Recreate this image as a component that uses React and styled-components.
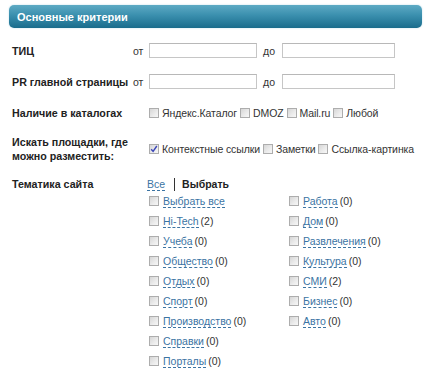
import React from "react";
import styled, { createGlobalStyle } from "styled-components";

const GlobalStyle = createGlobalStyle`
  body {
    margin: 0;
    background: #fff;
    font-family: "Liberation Sans", Tahoma, Arial, sans-serif;
    font-size: 10.5px;
    color: #333;
  }
`;

const Panel = styled.div`
  width: 424px;
  height: 376px;
  overflow: hidden;
`;

const Header = styled.div`
  margin: 5px 2px 0 9px;
  height: 23px;
  border-radius: 5px;
  background: linear-gradient(to bottom, #5eaac4 0%, #3a8fae 45%, #1a6c8c 100%);
  box-shadow: 0 0 2px #b9dbe8;
  display: flex;
  align-items: center;
  padding-left: 8px;
  color: #fff;
  font-weight: bold;
  font-size: 11px;
`;

const Form = styled.div`
  display: flex;
  flex-direction: column;
  gap: 14px;
  padding: 14px 0 0 12px;
`;

const Row = styled.div`
  display: grid;
  grid-template-columns: 121px 13px 1fr;
  align-items: ${(p) => (p.$top ? "start" : "center")};
  min-height: 17px;
`;

const Label = styled.div`
  grid-column: ${(p) => (p.$wide ? "span 2" : "span 1")};
  font-weight: bold;
  font-size: 10.7px;
  color: #222;
  line-height: 14px;
  white-space: nowrap;
`;

const Prefix = styled.span`
  color: #333;
`;

const Controls = styled.div`
  display: flex;
  align-items: center;
  gap: 0;
`;

const Field = styled.input`
  box-sizing: border-box;
  width: ${(p) => p.$w}px;
  height: 15px;
  margin-left: ${(p) => p.$ml || 0}px;
  border: 1px solid #c6c6c6;
  border-top-color: #b8b8b8;
  background: #fff;
  padding: 0 2px;
  font: inherit;
  outline: none;
`;

const Sep = styled.span`
  margin: 0 7px 0 6px;
`;

const Option = styled.label`
  display: inline-flex;
  align-items: center;
  gap: 3px;
  white-space: nowrap;
  color: #333;
  line-height: 14px;
  letter-spacing: -0.1px;
`;

const Box = styled.span`
  box-sizing: border-box;
  width: 10px;
  height: 10px;
  margin-left: 3px;
  border: 1px solid #adadad;
  background: linear-gradient(135deg, #d6d6d6 0%, #ececec 60%, #f7f7f7 100%);
  display: inline-flex;
  align-items: center;
  justify-content: center;
  flex: none;
`;

const Topic = styled.div`
  grid-column: 3;
  display: flex;
  flex-direction: column;
`;

const Tabs = styled.div`
  display: flex;
  align-items: center;
  height: 14px;
  line-height: 14px;
  margin-left: 1px;
`;

const TabLink = styled.span`
  color: #3b74a3;
  border-bottom: 1px dashed #3b74a3;
  line-height: 12px;
`;

const Bar = styled.span`
  width: 1px;
  height: 13px;
  background: #333;
  margin: 0 7px 0 9px;
`;

const Strong = styled.span`
  font-weight: bold;
  color: #222;
`;

const Columns = styled.div`
  display: grid;
  grid-template-columns: 140px 140px;
`;

const Column = styled.div`
  display: flex;
  flex-direction: column;
`;

const Item = styled.label`
  height: 20px;
  display: flex;
  align-items: center;
  gap: 4px;
  white-space: nowrap;
`;

const Link = styled.span`
  color: #3b74a3;
  border-bottom: 1px dashed #3b74a3;
  line-height: 12px;
`;

const Count = styled.span`
  color: #333;
  margin-left: 2px;
`;

function Check({ checked }) {
  return (
    <Box>
      {checked && (
        <svg width="8" height="8" viewBox="0 0 8 8">
          <path d="M1.2 4.2 L3.1 6.4 L6.8 1" fill="none" stroke="#3b46b8" strokeWidth="1.4" />
        </svg>
      )}
    </Box>
  );
}

const left = [
  ["Выбрать все"],
  ["Hi-Tech", 2],
  ["Учеба", 0],
  ["Общество", 0],
  ["Отдых", 0],
  ["Спорт", 0],
  ["Производство", 0],
  ["Справки", 0],
  ["Порталы", 0],
];

const right = [
  ["Работа", 0],
  ["Дом", 0],
  ["Развлечения", 0],
  ["Культура", 0],
  ["СМИ", 2],
  ["Бизнес", 0],
  ["Авто", 0],
];

function TopicColumn({ items }) {
  return (
    <Column>
      {items.map(([name, n]) => (
        <Item key={name}>
          <Check />
          <span>
            <Link>{name}</Link>
            {n !== undefined && <Count>({n})</Count>}
          </span>
        </Item>
      ))}
    </Column>
  );
}

export default function App() {
  return (
    <Panel>
      <GlobalStyle />
      <Header>Основные критерии</Header>
      <Form>
        <Row>
          <Label>ТИЦ</Label>
          <Prefix>от</Prefix>
          <Controls>
            <Field $w={108} $ml={3} />
            <Sep>до</Sep>
            <Field $w={113} />
          </Controls>
        </Row>
        <Row>
          <Label>PR главной страницы</Label>
          <Prefix>от</Prefix>
          <Controls>
            <Field $w={108} $ml={3} />
            <Sep>до</Sep>
            <Field $w={113} />
          </Controls>
        </Row>
        <Row>
          <Label $wide>Наличие в каталогах</Label>
          <Controls>
            <Option><Check />Яндекс.Каталог</Option>
            <Option><Check />DMOZ</Option>
            <Option><Check />Mail.ru</Option>
            <Option><Check />Любой</Option>
          </Controls>
        </Row>
        <Row>
          <Label $wide>
            Искать площадки, где
            <br />
            можно разместить:
          </Label>
          <Controls>
            <Option><Check checked />Контекстные ссылки</Option>
            <Option><Check />Заметки</Option>
            <Option><Check />Ссылка-картинка</Option>
          </Controls>
        </Row>
        <Row $top>
          <Label $wide>Тематика сайта</Label>
          <Topic>
            <Tabs>
              <TabLink>Все</TabLink>
              <Bar />
              <Strong>Выбрать</Strong>
            </Tabs>
            <Columns>
              <TopicColumn items={left} />
              <TopicColumn items={right} />
            </Columns>
          </Topic>
        </Row>
      </Form>
    </Panel>
  );
}
